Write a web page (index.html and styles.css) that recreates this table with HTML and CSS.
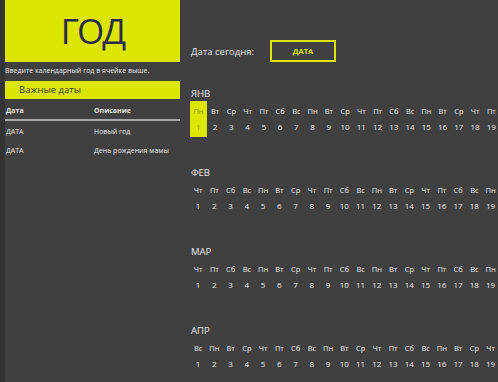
FILE: index.html
```html
<!DOCTYPE html>
<html lang="ru">
<head>
    <meta charset="UTF-8">
    <title>Календарь</title>
    <link rel="stylesheet" href="styles.css">
</head>
<body>
    <div class="side">
        <div class="year-box">ГОД</div>
        <div class="hint">Введите календарный год в ячейке выше.</div>
        <div class="dates-bar">Важные даты</div>
        <div class="dates-table">
            <div class="row head"><span>Дата</span><span>Описание</span></div>
            <div class="row"><span>ДАТА</span><span>Новый год</span></div>
            <div class="row"><span>ДАТА</span><span>День рождения мамы</span></div>
        </div>
    </div>

    <div class="main">
        <div class="today">
            <span class="today-label">Дата сегодня:</span>
            <div class="today-box">ДАТА</div>
        </div>
        <div id="months"></div>
    </div>

    <script>
        document.addEventListener("DOMContentLoaded", function () {
            // 2018: month names and first weekday (0 = Пн)
            const days = ['Пн', 'Вт', 'Ср', 'Чт', 'Пт', 'Сб', 'Вс'];
            const months = [
                { name: 'ЯНВ', start: 0 },
                { name: 'ФЕВ', start: 3 },
                { name: 'МАР', start: 3 },
                { name: 'АПР', start: 6 }
            ];
            const holder = document.getElementById('months');

            months.forEach(function (m, mi) {
                let block = document.createElement('div');
                block.className = 'month';
                let label = document.createElement('div');
                label.className = 'month-name';
                label.textContent = m.name;
                block.appendChild(label);

                let grid = document.createElement('div');
                grid.className = 'month-days';
                for (let d = 1; d <= 19; d++) {
                    let col = document.createElement('div');
                    col.className = 'day';
                    if (mi === 0 && d === 1) col.className += ' today-day';
                    col.innerHTML = '<span class="wd">' + days[(m.start + d - 1) % 7] + '</span><span class="num">' + d + '</span>';
                    grid.appendChild(col);
                }
                block.appendChild(grid);
                holder.appendChild(block);
            });
        });
    </script>
</body>
</html>
```

FILE: styles.css
```css
body {
    margin: 0;
    height: 382px;
    overflow: hidden;
    display: flex;
    background-color: #404040;
    color: #e8e8e8;
    font-family: 'Open Sans', 'Noto Sans', sans-serif;
    border-left: 5px solid #343434;
}

.side {
    width: 175px;
    flex-shrink: 0;
}

.year-box {
    height: 62px;
    background-color: #dce600;
    color: #2a2c44;
    font-size: 35px;
    line-height: 62px;
    text-align: center;
    letter-spacing: -2px;
}

.hint {
    font-size: 7px;
    line-height: 18px;
    margin-bottom: 1px;
}

.dates-bar {
    height: 18px;
    line-height: 18px;
    background-color: #dce600;
    color: #3a3a30;
    font-size: 9.5px;
    padding-left: 14px;
}

.dates-table {
    margin-top: 4px;
}

.row {
    display: flex;
    font-size: 7px;
    height: 19px;
    line-height: 19px;
    padding-left: 1px;
}

.row span:first-child {
    width: 88px;
}

.row.head {
    font-weight: bold;
    height: 16px;
    line-height: 16px;
    border-bottom: 2px solid #a8a8a8;
    margin-bottom: 1px;
}

.main {
    flex: 1;
    padding: 40px 0 0 10px;
    overflow: hidden;
}

.today {
    display: flex;
    align-items: center;
    height: 22px;
    margin-bottom: 25px;
}

.today-label {
    font-size: 9.5px;
    width: 79px;
    padding-left: 1px;
}

.today-box {
    width: 62px;
    height: 18px;
    border: 2px solid #dce600;
    color: #dce600;
    font-size: 7.5px;
    font-weight: bold;
    line-height: 18px;
    text-align: center;
}

.month {
    margin-bottom: 29px;
}

.month-name {
    font-size: 9.5px;
    line-height: 14px;
    padding-left: 1px;
}

.month-days {
    display: flex;
}

.day {
    width: 16.25px;
    flex-shrink: 0;
    display: flex;
    flex-direction: column;
    align-items: center;
    padding: 4px 0 4px;
    font-size: 7.5px;
}

.wd {
    line-height: 13px;
}

.num {
    line-height: 13px;
    margin-top: 2px;
    font-size: 8px;
}

.today-day {
    background-color: #dce600;
    color: #8c9000;
    width: 17px;
}
```
